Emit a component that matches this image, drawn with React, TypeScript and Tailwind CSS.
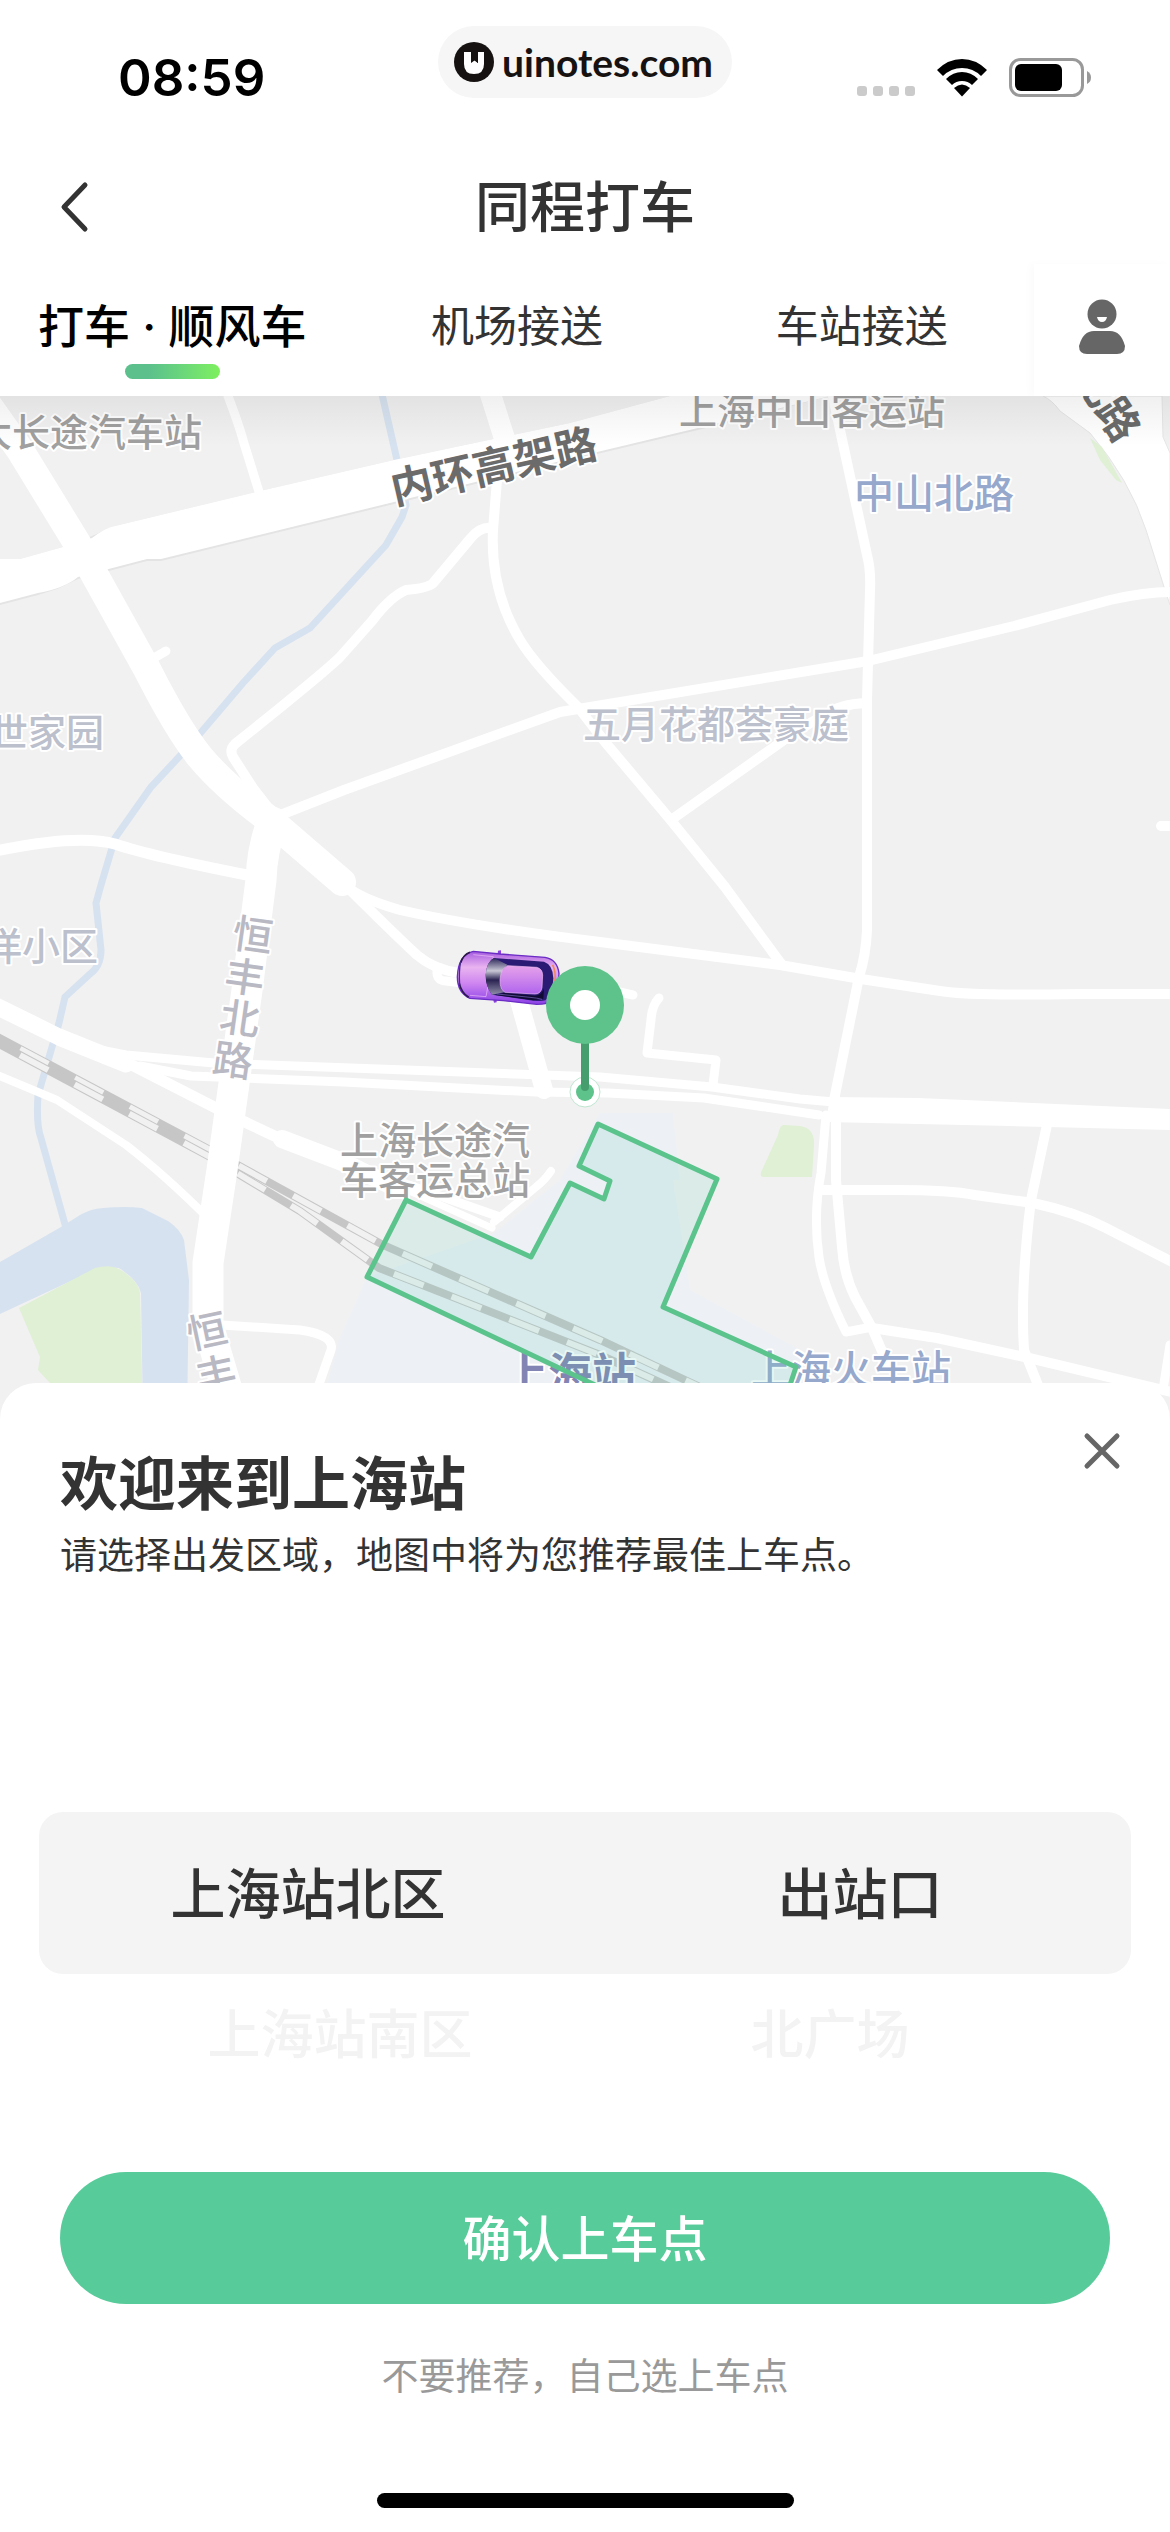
import { useState } from "react"
import clsx from "clsx"

const tabs = ["打车 · 顺风车", "机场接送", "车站接送"]

const pickerRows = [
  { area: "上海站北区", gate: "出站口" },
  { area: "上海站南区", gate: "北广场" },
]

const roads = [
  // secondary streets
  { d: "M228 396 Q240 428 243 440 L260 495", w: 9 },
  { d: "M497 480 L493 530 Q490 590 520 640 Q535 665 578 707 L605 742 L669 818 L725 887 L782 965", w: 10 },
  { d: "M493 528 Q480 526 470 539 L434 582 Q430 588 406 590 Q390 597 372 621 L340 657 Q325 672 235 744 Q229 750 233 757 L253 788 L270 810", w: 10 },
  { d: "M283 814 L344 790 L560 712 L868 661 L1014 626 L1110 600 Q1145 592 1170 592", w: 10 },
  { d: "M0 850 Q80 834 115 844 Q150 856 252 876", w: 11 },
  { d: "M154 658 L166 651", w: 9 },
  { d: "M833 396 L840 430 L867 555 Q871 570 870 590 L867 700 V930 Q866 955 859 977 L834 1100", w: 10 },
  { d: "M866 703 Q840 704 825 715 Q800 728 784 740 L671 820", w: 10 },
  { d: "M1161 826 H1180", w: 10 },
  { d: "M350 889 Q365 900 400 910 Q470 926 600 942 L780 965 L861 979 L940 991 Q970 996 1079 994 H1170", w: 10 },
  { d: "M100 1050 L126 1055 L214 1063 L600 1077 L712 1087 L800 1099 L834 1102", w: 9 },
  { d: "M140 1066 L191 1076 L344 1082 L536 1092 L608 1093 L704 1098 L819 1115", w: 9 },
  { d: "M-10 1072 L57 1100 L126 1145 Q165 1175 212 1222", w: 8 },
  { d: "M342 882 Q390 930 417 955 Q435 970 460 973", w: 10 },
  { d: "M437 970 Q436 981 446 981 L470 984", w: 9 },
  { d: "M610 990 L633 995", w: 9 },
  { d: "M659 998 Q652 1005 651 1020 L647 1053 L716 1060 L713 1085", w: 9 },
  { d: "M826 1115 L821 1173 Q813 1215 819 1257 Q823 1285 846 1332 L872 1327", w: 9 },
  { d: "M836 1115 V1180 L842 1247 Q844 1275 855 1297 L872 1328 L888 1365", w: 10 },
  { d: "M822 1190 H895 Q950 1190 975 1195 L1033 1203 Q1075 1212 1106 1228 L1180 1266", w: 10 },
  { d: "M1048 1120 L1031 1200 Q1020 1290 1024 1350 L1040 1390", w: 10 },
  { d: "M872 1328 L937 1338 L1029 1358 L1180 1394", w: 10 },
  { d: "M1170 1345 L1163 1390", w: 9 },
  { d: "M222 1325 L300 1330 Q335 1335 331 1350 L317 1390", w: 9 },
  { d: "M494 1222 L536 1187 Q545 1180 551 1171", w: 8 },
  { d: "M126 1062 L214 1107 L249 1124 L300 1148", w: 11 },
  { d: "M400 1182 L500 1217", w: 9 },
  { d: "M385 1180 L492 1228", w: 7 },
  // main streets
  { d: "M486 380 L505 440", w: 21 },
  { d: "M516 990 L544 1090", w: 18 },
  { d: "M-10 1003 L59 1037 L126 1064", w: 17 },
  { d: "M282 1139 L345 1163 L400 1190", w: 18 },
  { d: "M-12 405 L20 450 L77 543 L147 669 Q178 730 200 757 Q225 787 270 820 L342 882", w: 28 },
  { d: "M272 822 Q262 850 261 880 L247 990 L222 1170 L208 1263 V1325 L230 1400", w: 31 },
]

const rails = [
  "M-10 1033 L212 1151 L383 1245 L600 1340 L700 1387",
  "M-10 1039 L212 1158 L300 1211 L379 1268 L600 1355 L670 1387",
]

const zone =
  "M406 1200 L531 1257 L570 1183 L604 1199 L610 1181 L579 1166 L598 1124 L717 1179 L663 1307 L796 1367 L775 1430 L690 1430 L367 1277 Z"

function RideMap() {
  return (
    <svg
      viewBox="0 396 1170 1023"
      preserveAspectRatio="xMidYMin slice"
      className="block w-full font-['Noto_Sans_CJK_SC',sans-serif] font-medium"
      role="img"
      aria-label="地图"
    >
      <defs>
        <linearGradient id="carBody" x1="0" y1="0" x2="0" y2="1">
          <stop offset="0" stopColor="#a55be0" />
          <stop offset="0.3" stopColor="#e9b4f0" />
          <stop offset="0.6" stopColor="#cf86f0" />
          <stop offset="1" stopColor="#8a3fe6" />
        </linearGradient>
        <linearGradient id="carRoof" x1="0" y1="0" x2="0" y2="1">
          <stop offset="0" stopColor="#e7a2ea" />
          <stop offset="1" stopColor="#b065ee" />
        </linearGradient>
        <linearGradient id="carGlass" x1="0" y1="0" x2="0" y2="1">
          <stop offset="0" stopColor="#2b2558" />
          <stop offset="0.35" stopColor="#c9c8d6" />
          <stop offset="0.6" stopColor="#2a2352" />
          <stop offset="1" stopColor="#8f8da8" />
        </linearGradient>
        <linearGradient id="topShade" x1="0" y1="0" x2="0" y2="1">
          <stop offset="0" stopColor="#000" stopOpacity="0.06" />
          <stop offset="1" stopColor="#000" stopOpacity="0" />
        </linearGradient>
      </defs>

      <rect y="396" width="1170" height="1023" fill="#f1f1f1" />

      {/* Station grounds */}
      <path d="M367 1277 L339 1340 L318 1419 H800 V1350 L690 1290 L673 1113 H600 L560 1180 L494 1233 Z" fill="#edf0f5" />
      <path d="M673 1180 L717 1179 L690 1290 Z" fill="#f1f1f1" />

      {/* Water and parks */}
      <path
        d="M381 390 L397 460 L406 505 L402 517 L386 545 L310 628 L275 648 L243 683 L192 743 L151 787 L115 838 L101 885 L96 903 L101 950 Q101 966 90 974 L65 997 L59 1023 L38 1095 Q36 1125 41 1138 L66 1228"
        fill="none"
        stroke="#d7e2f0"
        strokeWidth="7"
      />
      <path
        d="M0 1262 L61 1227 L80 1215 Q90 1209 103 1208 Q125 1206 142 1208 L168 1221 Q180 1229 184 1240 L189 1280 L187 1419 H143 L141 1293 Q138 1280 119 1268 L101 1267 L0 1314 Z"
        fill="#d7e2f0"
      />
      <path d="M19 1308 L95 1268 Q110 1264 119 1269 Q138 1280 140 1293 L143 1419 H60 L50 1383 L38 1370 L40 1357 Z" fill="#dff0d5" />
      <path d="M784 1125 L800 1126 Q815 1128 814 1145 L812 1177 H766 Q758 1178 762 1170 L778 1135 Q780 1124 784 1125 Z" fill="#dff0d5" />

      {/* Railway */}
      {rails.map((d) => (
        <g key={d} fill="none">
          <path d={d} stroke="#c6c6c6" strokeWidth="8" />
          <path d={d} stroke="#f1f1f1" strokeWidth="6" strokeDasharray="32 30" strokeDashoffset="-34" />
        </g>
      ))}

      {/* Elevated ring roads */}
      <path
        d="M0 559 H20 L63 547 L92 536 L115 526 L260 491 L394 460 L570 423 L670 396 H830 L723 424 L593 455 L394 504 L161 561 H147 L78 579 L57 589 L38 595 L0 605 Z"
        fill="#e4e4e4"
      />
      <path
        d="M0 559 H20 L63 547 L92 538 Q105 528 115 526 L260 491 L394 460 L570 423 L670 396 H830 L723 422 L593 453 L394 502 L161 559 H147 L78 577 Q65 588 38 593 L0 603 Z"
        fill="#fff"
      />
      <path d="M1043 396 Q1052 400 1060 411 L1090 433 Q1130 480 1146 530 L1165 590 L1170 605 V453 L1163 437 L1162 396 Z" fill="#fff" stroke="#e6e6e6" strokeWidth="1" />
      <path d="M1090 438 L1102 447 L1122 483 L1116 480 L1100 460 Z" fill="#dff0d5" />

      {roads.map((r) => (
        <path
          key={r.d}
          d={r.d}
          fill="none"
          stroke="#fff"
          strokeWidth={r.w}
          strokeLinecap="round"
          strokeLinejoin="round"
        />
      ))}
      <path d="M830 1097 L918 1098 L1170 1109 V1130 L1010 1126 L826 1122 Z" fill="#fff" />

      <g paintOrder="stroke" stroke="#fff" strokeWidth="4" strokeLinejoin="round" textAnchor="middle">
        <g fontSize="38" fill="#a0a0a0">
          <text x="202" y="446" textAnchor="end">大长途汽车站</text>
          <text x="812" y="424">上海中山客运站</text>
          <text x="435" y="1154">上海长途汽</text>
          <text x="435" y="1194">车客运总站</text>
        </g>
        <g fontSize="38" fill="#bbc0cc">
          <text x="104" y="746" textAnchor="end">世家园</text>
          <text x="716" y="738">五月花都荟豪庭</text>
          <text x="98" y="960" textAnchor="end">洋小区</text>
        </g>
        <g fontSize="42" fill="#6b6b6b" className="font-bold">
          <text transform="translate(497 481) rotate(-13)">内环高架路</text>
          <text transform="translate(1117 445) rotate(57)" textAnchor="end">北路</text>
        </g>
        <g fontSize="40" fill="#b9b9c4">
          <text transform="translate(253 935) rotate(8)" y="15">恒</text>
          <text transform="translate(245 977) rotate(8)" y="15">丰</text>
          <text transform="translate(240 1018) rotate(8)" y="15">北</text>
          <text transform="translate(233 1060) rotate(8)" y="15">路</text>
          <text transform="translate(207 1331) rotate(-12)" y="15">恒</text>
          <text transform="translate(216 1374) rotate(-12)" y="15">丰</text>
        </g>
        <text x="934" y="508" fontSize="40" fill="#96a8cc">中山北路</text>
        <text x="851" y="1384" fontSize="40" fill="#96a8cc">上海火车站</text>
        <text x="570" y="1390" fontSize="44" fill="#8285b3" className="font-bold">上海站</text>
      </g>

      {/* Pick-up zone */}
      <path d={zone} fill="#5cc9b2" fillOpacity="0.15" stroke="#5bc38c" strokeWidth="5" strokeLinejoin="round" />

      {/* Car, drawn at 3x */}
      <g transform="translate(420 920) scale(0.3333)">
        <path d="M232 108 L234 92 L243 91 L243 110 Z M218 232 L222 248 L230 247 L230 232 Z" fill="#8b3fe0" />
        <path
          d="M160 94 L240 102 L375 112 Q412 118 417 160 Q416 215 398 240 Q385 253 350 253 L250 242 L150 235 Q112 218 112 170 Q115 104 160 94 Z"
          fill="url(#carBody)"
          stroke="#6a2cc4"
          strokeWidth="4"
        />
        <path d="M150 97 Q130 104 122 128 M118 190 Q124 218 146 232" fill="none" stroke="#2b1a4a" strokeWidth="5" />
        <path d="M122 125 Q116 155 119 195" fill="none" stroke="#4a2a86" strokeWidth="4" />
        <path d="M160 104 L220 110 L198 230 L150 226" fill="none" stroke="#f3c8f6" strokeWidth="3" opacity="0.6" />
        <path d="M222 114 L372 125 Q399 134 400 175 Q398 225 376 241 Q366 245 340 242 L216 224 Q197 200 197 165 Q200 124 222 114 Z" fill="#2b1b74" />
        <path d="M222 114 L262 134 Q243 150 240 180 Q238 205 252 217 L216 224 Q197 200 197 165 Q200 124 222 114 Z" fill="url(#carGlass)" />
        <path d="M252 219 L345 227 Q366 226 372 205 L370 236 L340 241 L226 225 Z" fill="#0f0b33" />
        <path d="M230 222 L330 232 Q352 234 366 238" fill="none" stroke="#7b6cc0" strokeWidth="2" />
        <path d="M262 137 L350 142 Q367 146 368 165 L366 203 Q362 222 345 222 L255 217 Q240 210 240 180 Q243 145 262 137 Z" fill="url(#carRoof)" stroke="#f0bdf5" strokeWidth="2" />
        <path d="M398 135 Q408 155 405 185" fill="none" stroke="#f0895a" strokeWidth="5" />
      </g>

      {/* Pick-up pin */}
      <circle cx="585" cy="1092" r="15" fill="#fff" stroke="#bfe6d0" strokeWidth="1" />
      <circle cx="585" cy="1092" r="9" fill="#5dc38b" />
      <path d="M585 1040 V1087" stroke="#469e6e" strokeWidth="8" strokeLinecap="round" />
      <circle cx="585" cy="1005" r="39" fill="#5dc38b" />
      <circle cx="585" cy="1005" r="15" fill="#fff" />

      <rect y="396" width="1170" height="50" fill="url(#topShade)" />
    </svg>
  )
}

function StatusBar() {
  return (
    <div className="grid h-36 grid-cols-3 items-start">
      <div className="pt-12 pl-[118px] font-[Inter] text-[51px] leading-[60px] font-semibold text-black">08:59</div>

      <div className="mt-[26px] flex h-[72px] w-[294px] items-center gap-2 justify-self-center rounded-[36px] bg-[#f6f6f6] pl-4">
        <svg viewBox="0 0 40 40" className="size-10 shrink-0" aria-hidden="true">
          <circle cx="20" cy="20" r="20" fill="#161211" />
          <path d="M10 10 H17 V20 L20.500 18 L24 21 V10 H30 V22 Q30 32 20 32 Q10 32 10 22 Z" fill="#fff" />
          <path d="M17 9 H24 V21 L20.500 18.500 L17 21 Z" fill="#161211" />
        </svg>
        <span className="font-[Lato] text-[39px] leading-none font-bold text-[#161211]">uinotes.com</span>
      </div>

      <div className="flex items-end justify-end pt-[58px] pr-[78px]">
        <div className="mr-[22px] mb-px flex gap-[6px]">
          {[0, 1, 2, 3].map((i) => (
            <span key={i} className="size-[10px] rounded-[3px] bg-[#cbcbcb]" />
          ))}
        </div>
        <svg viewBox="0 0 50 38" className="mr-[22px] h-[38px] w-[50px]" fill="#000" aria-hidden="true">
          <path d="M0 11 Q11 0 25 0 Q39 0 50 11 L44 17 Q36 9 25 9 Q14 9 6 17 Z" />
          <path d="M9 20 Q16 13 25 13 Q34 13 41 20 L35 26 Q31 22 25 22 Q19 22 15 26 Z" />
          <path d="M17 29 Q21 25.500 25 25.500 Q29 25.500 33 29 L25 37.500 Z" />
        </svg>
        <svg viewBox="0 0 83 39" className="h-[39px] w-[83px]" aria-hidden="true">
          <rect x="1.500" y="1.500" width="72" height="36" rx="10" fill="none" stroke="#999" strokeWidth="3" />
          <rect x="6" y="6" width="47" height="27" rx="6" fill="#000" />
          <path d="M78 13 Q82 15 82 19.500 Q82 24 78 26 Z" fill="#999" />
        </svg>
      </div>
    </div>
  )
}

export default function App() {
  const [tab, setTab] = useState(0)

  return (
    <div className="flex min-h-screen w-full flex-col overflow-hidden bg-white font-['Noto_Sans_CJK_SC',sans-serif]">
      <StatusBar />

      {/* Title bar */}
      <header className="grid h-[120px] grid-cols-[1fr_auto_1fr] items-center px-[58px] pt-[6px]">
        <button type="button" aria-label="返回" className="justify-self-start">
          <svg viewBox="0 0 32 52" className="h-[52px] w-8" fill="none" stroke="#333" strokeWidth="5" strokeLinecap="round" strokeLinejoin="round">
            <path d="M27 4 L6 26 L27 48" />
          </svg>
        </button>
        <h1 className="pb-2 text-[55px] leading-none font-medium text-[#333]">同程打车</h1>
      </header>

      {/* Tabs */}
      <nav className="flex h-[132px] font-[Inter,'Noto_Sans_CJK_SC',sans-serif]">
        {tabs.map((label, i) => (
          <button
            key={label}
            type="button"
            onClick={() => setTab(i)}
            className={clsx(
              "flex flex-1 flex-col items-center gap-2 pt-8 leading-[60px] whitespace-nowrap",
              i === tab ? "text-[46px] font-medium text-black" : "text-[43px] text-[#333]"
            )}
          >
            {label}
            {i === tab && <span className="h-[15px] w-[95px] rounded-full bg-linear-to-r from-[#5bc08c] from-25% to-[#7df05c]" />}
          </button>
        ))}
        <button type="button" aria-label="个人中心" className="flex w-[136px] justify-center pt-9 shadow-[-4px_0_8px_rgba(0,0,0,0.02)]">
          <svg viewBox="0 0 46 54" className="h-[54px] w-[46px] overflow-visible">
            <circle cx="23" cy="14" r="14.500" fill="#666" />
            <path d="M18 17 H28 Q27 22 23 22 Q19 22 18 17 Z" fill="#fff" />
            <path d="M15 31 H31 Q42 31 46 46 Q46 54 38 54 H8 Q0 54 0 46 Q4 31 15 31 Z" fill="#666" />
          </svg>
        </button>
      </nav>

      <RideMap />

      {/* Pick-up sheet */}
      <section className="relative -mt-9 flex flex-1 flex-col rounded-t-[36px] bg-white pt-16">
        <div className="flex items-start justify-between pr-12 pl-[60px]">
          <div>
            <h2 className="text-[58px] leading-[66px] font-bold text-[#333]">欢迎来到上海站</h2>
            <p className="mt-[10px] text-[37px] leading-[60px] text-[#333]">请选择出发区域，地图中将为您推荐最佳上车点。</p>
          </div>
          <button type="button" aria-label="关闭" className="-mt-4 p-0">
            <svg viewBox="0 0 40 40" className="size-10" stroke="#666" strokeWidth="5" strokeLinecap="round">
              <path d="M5 5 L35 35 M35 5 L5 35" />
            </svg>
          </button>
        </div>

        <div className="mx-[39px] mt-[229px] h-[162px] rounded-3xl bg-[#f4f4f4] pb-[6px]">
          <div className="grid h-full grid-cols-2 items-center text-center text-[55px] leading-none font-medium text-[#333]">
            <span className="pr-2">{pickerRows[0].area}</span>
            <span className="pl-1">{pickerRows[0].gate}</span>
          </div>
        </div>
        <div className="mx-[39px] grid h-[114px] grid-cols-2 items-center text-center text-[53px] leading-none font-medium text-[#f3f3f3]">
          <span className="pl-14">{pickerRows[1].area}</span>
          <span className="pr-14">{pickerRows[1].gate}</span>
        </div>

        <button type="button" className="mx-[60px] mt-[84px] h-[132px] rounded-full bg-[#58cb9a] pb-[6px] text-[49px] leading-none font-medium text-white">
          确认上车点
        </button>
        <a href="#" className="mt-10 self-center text-[37px] leading-[60px] text-[#999]">不要推荐，自己选上车点</a>

        <div className="mt-auto mb-6 h-[15px] w-[417px] self-center rounded-full bg-black" />
      </section>
    </div>
  )
}
